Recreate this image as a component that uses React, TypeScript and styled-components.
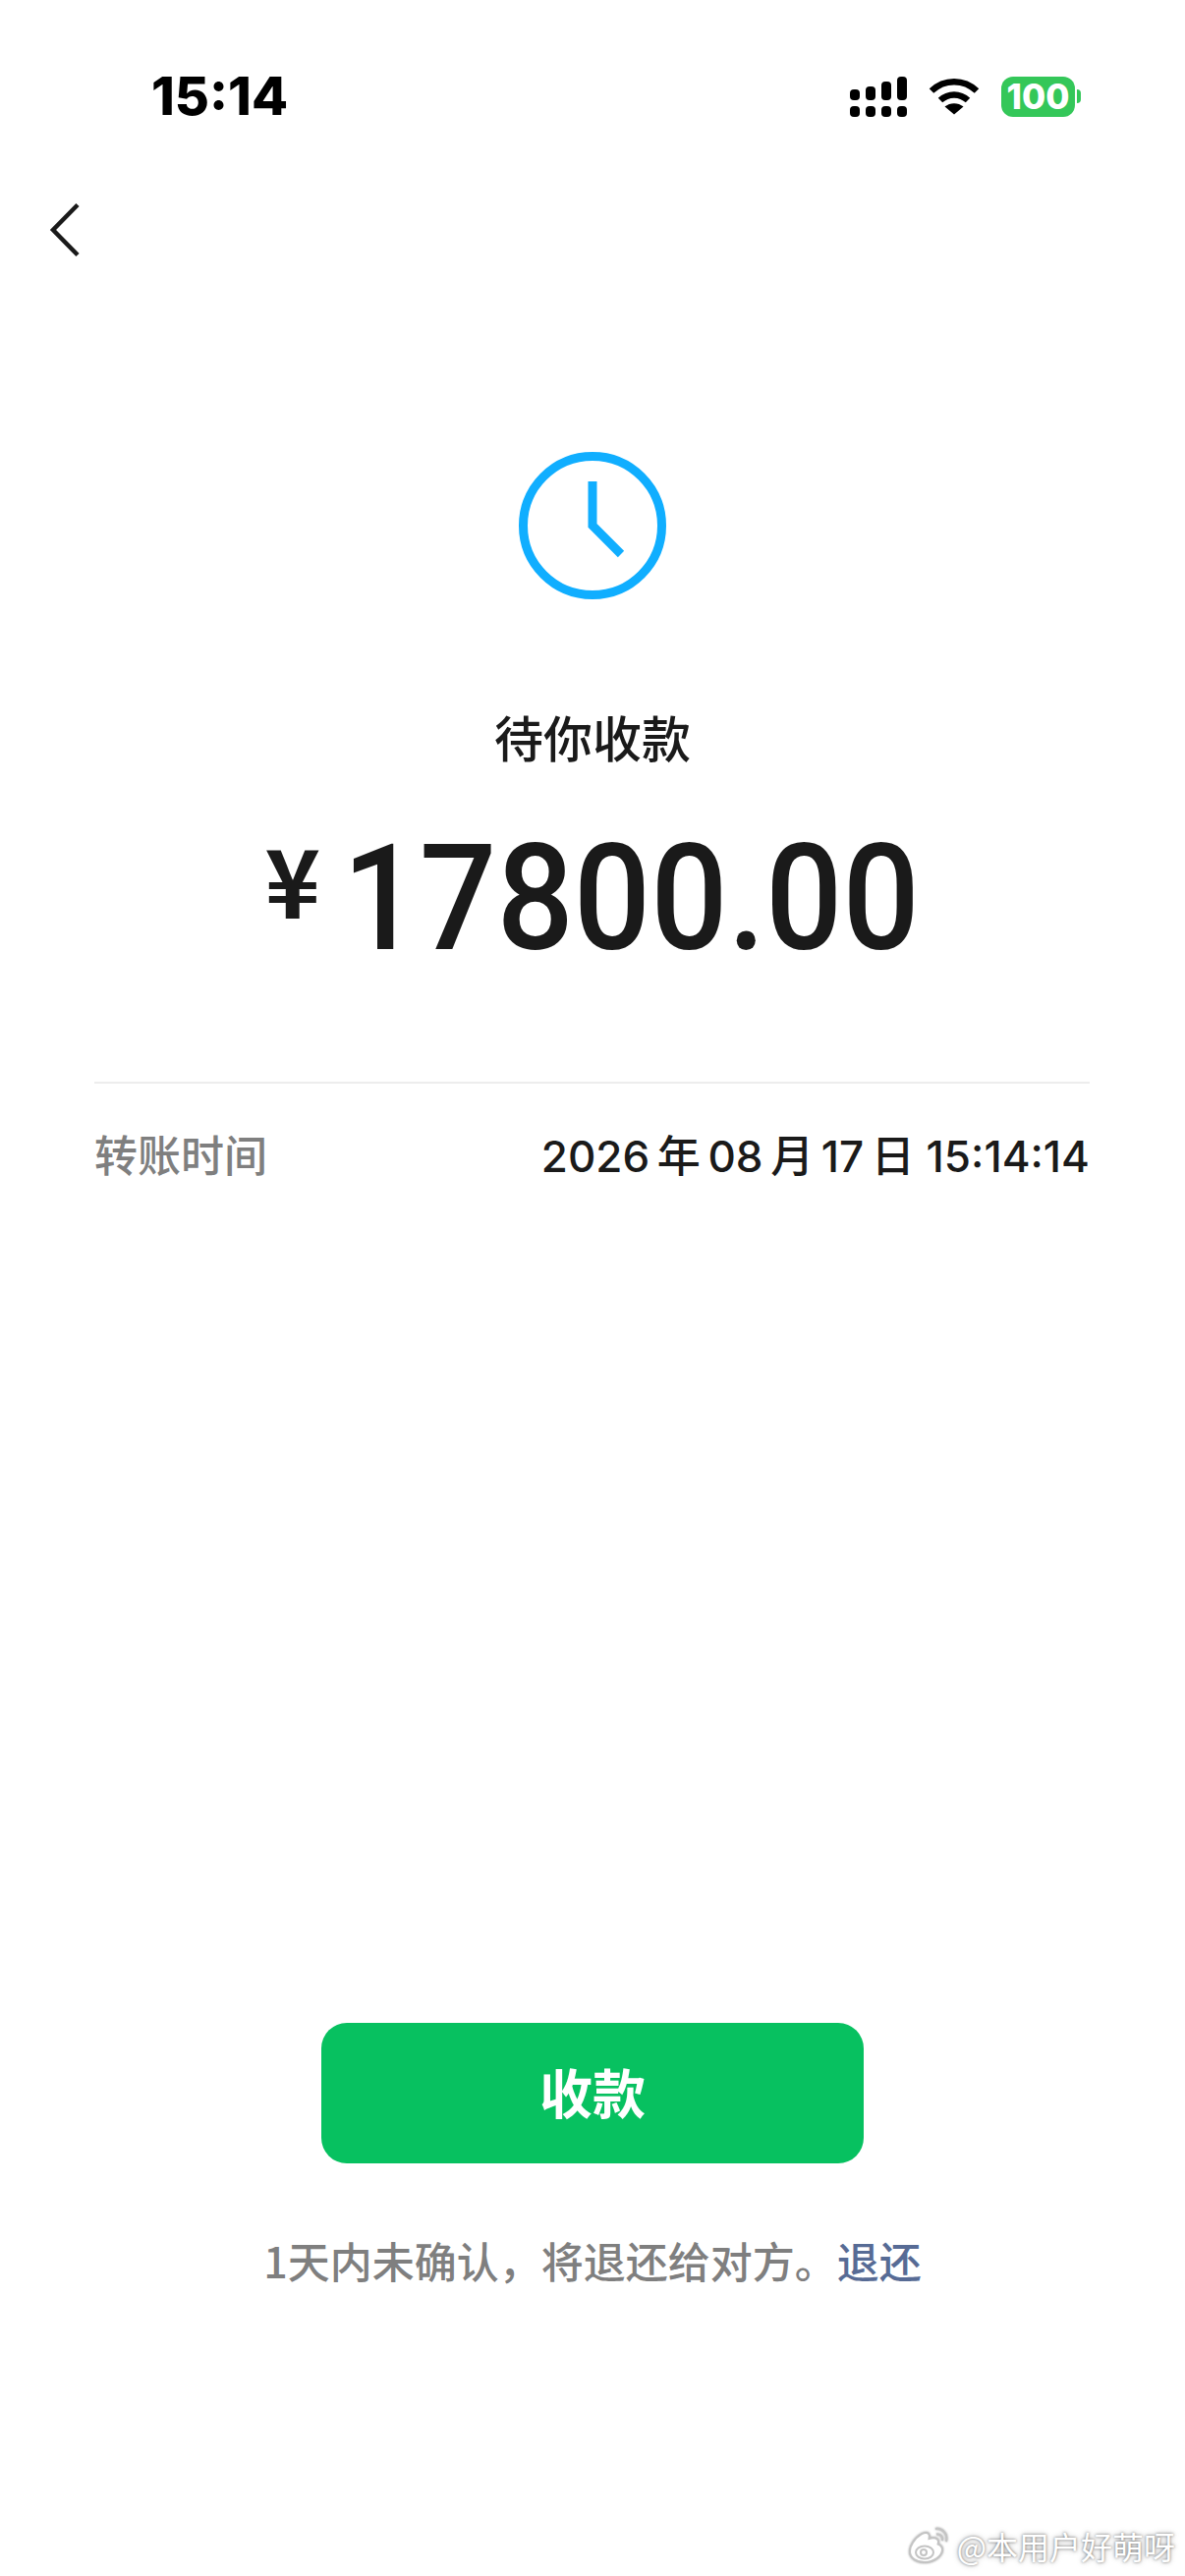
import React from "react";
import styled, { createGlobalStyle } from "styled-components";

const CJK = `"Noto Sans CJK SC", "Noto Sans", sans-serif`;

const GlobalStyle = createGlobalStyle`
  html, body {
    margin: 0;
    padding: 0;
    background: #fff;
  }
`;

const Page = styled.main`
  position: relative;
  width: 1206px;
  height: 2622px;
  overflow: hidden;
  display: flex;
  flex-direction: column;
  background: #fff;
  font-family: ${CJK};
`;

const StatusBar = styled.header`
  height: 42px;
  margin-top: 77px;
  padding: 0 106px 0 154px;
  display: flex;
  align-items: center;
  justify-content: space-between;
`;

const Clock = styled.span`
  font-family: Inter, sans-serif;
  font-size: 54px;
  font-weight: 800;
  line-height: 42px;
  color: #000;
`;

const StatusIcons = styled.div`
  display: flex;
  align-items: center;
  gap: 22px;
`;

const Battery = styled.div`
  display: flex;
  align-items: center;
  gap: 2px;
`;

const BatteryBody = styled.div`
  width: 75px;
  height: 41px;
  border-radius: 12px;
  background: #34c759;
  color: #fff;
  font-family: Inter, sans-serif;
  font-size: 35px;
  font-weight: 800;
  line-height: 41px;
  text-align: center;
`;

const BatteryNub = styled.div`
  width: 4px;
  height: 14px;
  border-radius: 0 7px 7px 0;
  background: #34c759;
`;

const BackButton = styled.button`
  align-self: flex-start;
  margin: 87px 0 0 50px;
  padding: 0;
  width: 32px;
  height: 56px;
  border: 0;
  background: none;
  display: block;
`;

const Summary = styled.section`
  margin-top: 198px;
  display: flex;
  flex-direction: column;
  align-items: center;
`;

const StateTitle = styled.div`
  margin-top: 104px;
  font-size: 50px;
  line-height: 70px;
  font-weight: 500;
  color: #1a1a1a;
`;

const Amount = styled.div`
  margin-top: 56px;
  height: 150px;
  display: flex;
  align-items: center;
  gap: 22px;
  color: #1a1a1a;
`;

const Currency = styled.span`
  font-family: ${CJK};
  font-size: 96px;
  font-weight: 700;
  line-height: 1;
  margin-top: -42px;
`;

const Figure = styled.span`
  display: inline-block;
  margin: 0 -25px;
  font-family: Roboto, sans-serif;
  font-size: 150px;
  font-weight: 500;
  line-height: 150px;
  transform: scaleX(0.92);
`;

const Details = styled.section`
  margin: 111px 97px 0 96px;
  border-top: 2px solid #ededed;
  padding-top: 41px;
`;

const DetailRow = styled.div`
  display: flex;
  align-items: center;
  justify-content: space-between;
  height: 60px;
`;

const DetailLabel = styled.span`
  font-size: 44px;
  font-weight: 500;
  color: #7f7f7f;
`;

const DetailValue = styled.span`
  font-family: Inter, ${CJK};
  font-size: 44px;
  font-weight: 500;
  color: #1a1a1a;
`;

const Footer = styled.footer`
  margin-top: auto;
  padding-bottom: 290px;
  display: flex;
  flex-direction: column;
  align-items: center;
`;

const ConfirmButton = styled.button`
  width: 552px;
  height: 143px;
  padding: 0 0 5px;
  border: 0;
  border-radius: 26px;
  background: #07c160;
  color: #fff;
  font-family: ${CJK};
  font-size: 54px;
  font-weight: 700;
`;

const Notice = styled.p`
  margin: 66px 0 0;
  font-size: 43px;
  line-height: 64px;
  font-weight: 500;
  color: #7f7f7f;
`;

const NoticeLink = styled.span`
  color: #576b95;
`;

const Watermark = styled.div`
  position: absolute;
  right: 10px;
  bottom: 9px;
  display: flex;
  align-items: center;
  gap: 6px;
  color: #fff;
  font-size: 32px;
  line-height: 44px;
  text-shadow: 0 0 3px rgba(0, 0, 0, 0.55), 0 0 6px rgba(0, 0, 0, 0.25);
`;

const SignalIcon = () => (
  <svg width="58" height="41" viewBox="0 0 58 41" fill="#000">
    <rect x="0" y="13" width="10" height="11" rx="4" />
    <rect x="16" y="10" width="10" height="14" rx="4" />
    <rect x="32" y="5" width="10" height="19" rx="4" />
    <rect x="48" y="0" width="10" height="24" rx="4" />
    <rect x="0" y="30" width="10" height="11" rx="4" />
    <rect x="16" y="30" width="10" height="11" rx="4" />
    <rect x="32" y="30" width="10" height="11" rx="4" />
    <rect x="48" y="30" width="10" height="11" rx="4" />
  </svg>
);

const WifiIcon = () => (
  <svg width="52" height="38" viewBox="0 0 52 38" fill="none" stroke="#000" strokeWidth="6.5">
    <path d="M3 13.5C16 1 36 1 49 13.5" />
    <path d="M12 23C20 15.5 32 15.5 40 23" />
    <path d="M26 37.5L16.5 29.5C22 25 30 25 35.5 29.5Z" fill="#000" stroke="none" />
  </svg>
);

const ChevronIcon = () => (
  <svg width="32" height="56" viewBox="0 0 32 56" fill="none" stroke="#1a1a1a" strokeWidth="4.5">
    <path d="M29 2.5L4 28L29 53.5" />
  </svg>
);

const PendingIcon = () => (
  <svg width="150" height="150" viewBox="0 0 150 150" fill="none" stroke="#10aeff" strokeWidth="9">
    <circle cx="75" cy="75" r="70.5" />
    <path d="M75 30V75L104 104" />
  </svg>
);

const WeiboIcon = () => (
  <svg
    width="44"
    height="40"
    viewBox="0 0 44 40"
    fill="none"
    stroke="#c4c4c4"
    strokeWidth="2"
    style={{ filter: "drop-shadow(0 0 1px rgba(0,0,0,0.4))" }}
  >
    <path
      d="M5 17C10 9 18 5 21 8C22.5 10 21.5 12 21.5 13C26 11.5 31 12 31 16C31 17 30.5 18 30.5 18.5C33 19.5 35 21 35 24C35 31 26 37 17 37C9 37 2 33 2 26C2 23 3 20 5 17Z"
      fill="#fff"
    />
    <ellipse cx="17" cy="27" rx="9" ry="6.5" />
    <circle cx="16" cy="27" r="3" />
    <path d="M28 3C35 2 41 8 39 16M29 8.5C33 8 36 11 35 15" />
  </svg>
);

export default function App() {
  return (
    <Page>
      <GlobalStyle />
      <StatusBar>
        <Clock>15:14</Clock>
        <StatusIcons>
          <SignalIcon />
          <WifiIcon />
          <Battery>
            <BatteryBody>100</BatteryBody>
            <BatteryNub />
          </Battery>
        </StatusIcons>
      </StatusBar>
      <BackButton aria-label="返回">
        <ChevronIcon />
      </BackButton>
      <Summary>
        <PendingIcon />
        <StateTitle>待你收款</StateTitle>
        <Amount>
          <Currency>¥</Currency>
          <Figure>17800.00</Figure>
        </Amount>
      </Summary>
      <Details>
        <DetailRow>
          <DetailLabel>转账时间</DetailLabel>
          <DetailValue>2026{"\u2009"}年{"\u2009"}08{"\u2009"}月{"\u2009"}17{"\u2009"}日 15:14:14</DetailValue>
        </DetailRow>
      </Details>
      <Footer>
        <ConfirmButton>收款</ConfirmButton>
        <Notice>
          1天内未确认，将退还给对方。<NoticeLink>退还</NoticeLink>
        </Notice>
      </Footer>
      <Watermark>
        <WeiboIcon />
        @本用户好萌呀
      </Watermark>
    </Page>
  );
}
